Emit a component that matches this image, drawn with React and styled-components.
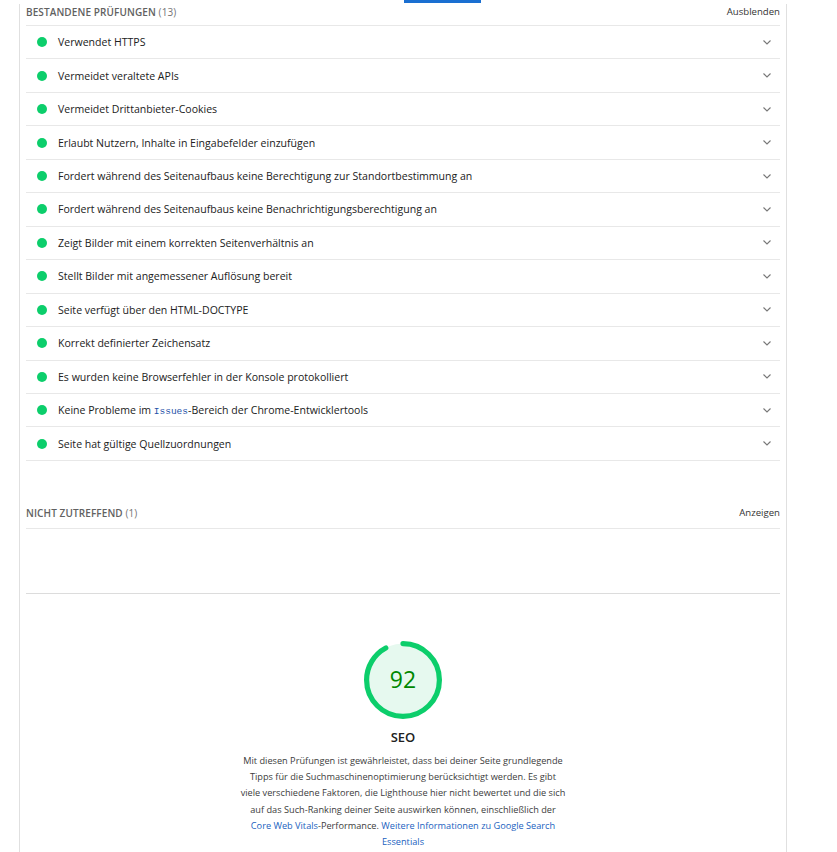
import React from 'react'
import styled, { createGlobalStyle } from 'styled-components'

const GlobalStyle = createGlobalStyle`
  html, body {
    margin: 0;
    padding: 0;
    background: #fff;
  }
  body {
    font-family: "Open Sans", "Noto Sans", sans-serif;
    color: #212121;
  }
`

const TopStrip = styled.div`
  height: 4px;
  padding-left: 404px;
`

const TabIndicator = styled.div`
  width: 77px;
  height: 3px;
  background: #1a6fd1;
`

const Panel = styled.div`
  width: 754px;
  margin-left: 19px;
  min-height: 848px;
  border-left: 1px solid #e0e0e0;
  border-right: 1px solid #e0e0e0;
  padding: 0 6px;
`

const GroupHeader = styled.div`
  display: flex;
  justify-content: space-between;
  align-items: flex-start;
  height: ${p => p.$height || 22}px;
  line-height: 16px;
  border-bottom: 1px solid #e8e8e8;
  box-sizing: border-box;
  margin-top: ${p => p.$top || 0}px;
`

const GroupTitle = styled.div`
  font-size: 10px;
  font-weight: 600;
  letter-spacing: 0.1px;
  text-transform: uppercase;
  color: #616161;
`

const Count = styled.span`
  font-weight: 400;
  color: #757575;
`

const Toggle = styled.div`
  font-size: 9.6px;
  color: #333;
`

const Row = styled.div`
  display: flex;
  align-items: center;
  height: 33.46px;
  box-sizing: border-box;
  border-bottom: 1px solid #e8e8e8;
  font-size: 10.55px;
  color: #212121;
`

const Dot = styled.span`
  width: 10px;
  height: 10px;
  border-radius: 50%;
  background: #0cce6b;
  margin: 0 11px;
  flex-shrink: 0;
`

const RowTitle = styled.span`
  flex: 1;
`

const Code = styled.code`
  font-family: "Liberation Mono", "DejaVu Sans Mono", monospace;
  font-size: 9.5px;
  color: #2451a8;
`

const Chevron = styled.svg`
  width: 8px;
  height: 5px;
  margin-right: 9px;
`

const Empty = styled.div`
  height: 64px;
  border-bottom: 1px solid #dcdcdc;
`

const ScoreBlock = styled.div`
  display: flex;
  flex-direction: column;
  align-items: center;
  padding-top: 47px;
`

const Gauge = styled.div`
  position: relative;
  width: 78px;
  height: 78px;
`

const GaugeValue = styled.div`
  position: absolute;
  inset: 0;
  display: flex;
  align-items: center;
  justify-content: center;
  font-size: 23px;
  color: #008800;
  padding-bottom: 2px;
  box-sizing: border-box;
`

const Label = styled.div`
  margin-top: 9px;
  font-size: 13px;
  font-weight: 600;
  color: #212121;
`

const Description = styled.p`
  margin: 7px 0 0;
  font-size: 9.2px;
  line-height: 16.2px;
  text-align: center;
  color: #3c3c3c;
  white-space: nowrap;
`

const Link = styled.a`
  color: #1a5fc0;
  text-decoration: none;
`

const passed = [
  'Verwendet HTTPS',
  'Vermeidet veraltete APIs',
  'Vermeidet Drittanbieter-Cookies',
  'Erlaubt Nutzern, Inhalte in Eingabefelder einzufügen',
  'Fordert während des Seitenaufbaus keine Berechtigung zur Standortbestimmung an',
  'Fordert während des Seitenaufbaus keine Benachrichtigungsberechtigung an',
  'Zeigt Bilder mit einem korrekten Seitenverhältnis an',
  'Stellt Bilder mit angemessener Auflösung bereit',
  'Seite verfügt über den HTML-DOCTYPE',
  'Korrekt definierter Zeichensatz',
  'Es wurden keine Browserfehler in der Konsole protokolliert',
  <>Keine Probleme im <Code>Issues</Code>-Bereich der Chrome-Entwicklertools</>,
  'Seite hat gültige Quellzuordnungen',
]

const ChevronIcon = () => (
  <Chevron viewBox="0 0 8 5">
    <path d="M0.5 0.5 L4 4 L7.5 0.5" fill="none" stroke="#777" strokeWidth="1.1" />
  </Chevron>
)

const ScoreGauge = ({ score }) => {
  const r = 56
  const c = 2 * Math.PI * r
  return (
    <Gauge>
      <svg viewBox="0 0 120 120" width="78" height="78">
        <circle cx="60" cy="60" r={r} fill="#e6f9ef" stroke="none" />
        <circle
          cx="60"
          cy="60"
          r={r}
          fill="none"
          stroke="#0cce6b"
          strokeWidth="8"
          strokeLinecap="round"
          strokeDasharray={`${(score / 100) * c} ${c}`}
          transform="rotate(-90 60 60)"
        />
      </svg>
      <GaugeValue>{score}</GaugeValue>
    </Gauge>
  )
}

const App = () => {
  return (
    <>
      <GlobalStyle />
      <TopStrip>
        <TabIndicator />
      </TopStrip>
      <Panel>
        <GroupHeader>
          <GroupTitle>Bestandene Prüfungen <Count>(13)</Count></GroupTitle>
          <Toggle>Ausblenden</Toggle>
        </GroupHeader>
        {passed.map((title, i) => (
          <Row key={i}>
            <Dot />
            <RowTitle>{title}</RowTitle>
            <ChevronIcon />
          </Row>
        ))}
        <GroupHeader $top={44} $height={24}>
          <GroupTitle>Nicht zutreffend <Count>(1)</Count></GroupTitle>
          <Toggle>Anzeigen</Toggle>
        </GroupHeader>
        <Empty />
        <ScoreBlock>
          <ScoreGauge score={92} />
          <Label>SEO</Label>
          <Description>
            Mit diesen Prüfungen ist gewährleistet, dass bei deiner Seite grundlegende<br />
            Tipps für die Suchmaschinenoptimierung berücksichtigt werden. Es gibt<br />
            viele verschiedene Faktoren, die Lighthouse hier nicht bewertet und die sich<br />
            auf das Such-Ranking deiner Seite auswirken können, einschließlich der<br />
            <Link href="#">Core Web Vitals</Link>-Performance. <Link href="#">Weitere Informationen zu Google Search</Link><br />
            <Link href="#">Essentials</Link>
          </Description>
        </ScoreBlock>
      </Panel>
    </>
  )
}

export default App
